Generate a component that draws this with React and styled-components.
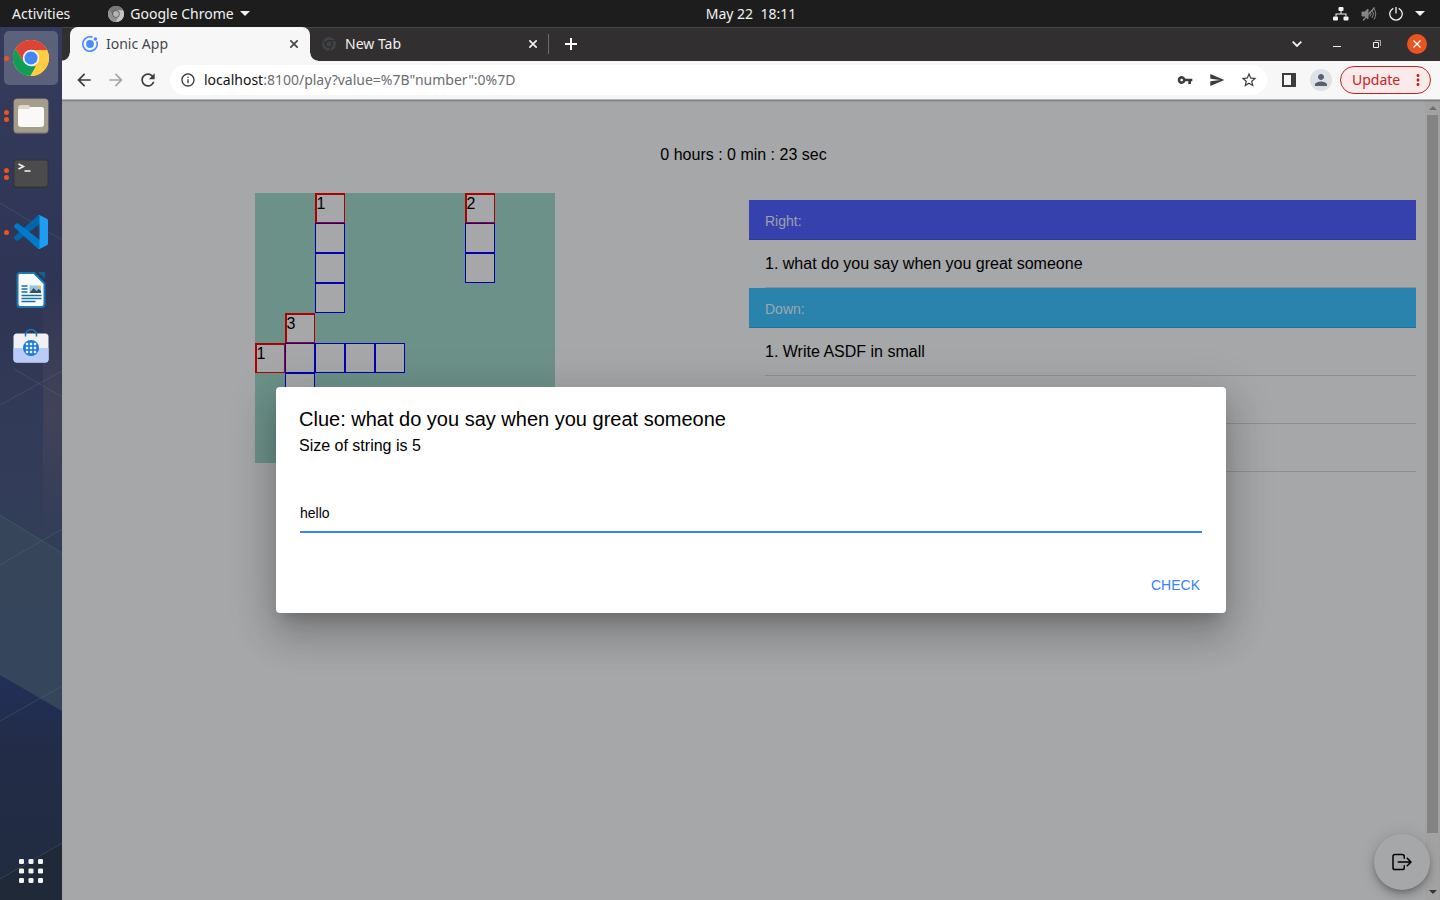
import React from "react";
import styled, { createGlobalStyle, css } from "styled-components";
import {
  MdArrowBack,
  MdArrowForward,
  MdRefresh,
  MdInfoOutline,
  MdVpnKey,
  MdSend,
  MdStarBorder,
  MdPerson,
  MdMoreVert,
} from "react-icons/md";

const GlobalStyle = createGlobalStyle`
  *, *::before, *::after { box-sizing: border-box; }
  html, body, #root { height: 100%; }
  body { margin: 0; background: #1d1d1d; }
  button, input { font: inherit; color: inherit; }
  h1, h2, p, ul { margin: 0; padding: 0; font-weight: 400; }
  svg { display: block; flex: none; }
`;

const uiFont = '"Noto Sans", "Open Sans", sans-serif';
const pageFont = '"Liberation Sans", Arial, sans-serif';

const Desktop = styled.div`
  display: flex;
  flex-direction: column;
  min-height: 100%;
  font: 14px/20px ${uiFont};
`;

const PlainButton = styled.button`
  display: flex;
  align-items: center;
  justify-content: center;
  padding: 0;
  border: 0;
  background: none;
  cursor: pointer;
`;

/* ---------- system bar ---------- */

const SystemBar = styled.header`
  display: grid;
  grid-template-columns: 1fr auto 1fr;
  align-items: center;
  height: 27px;
  background: #1d1d1d;
  color: #f2f2f2;
`;

const SystemMenus = styled.nav`
  display: flex;
  align-items: center;
  gap: 38px;
  padding-left: 12px;
`;

const SystemButton = styled(PlainButton)`
  gap: 6px;
  white-space: pre;
`;

const Clock = styled(SystemButton)`
  margin-left: 62px;
`;

const SystemTray = styled.div`
  display: flex;
  align-items: center;
  justify-content: flex-end;
  gap: 12px;
  padding-right: 15px;
`;

/* ---------- dock ---------- */

const Workspace = styled.div`
  display: flex;
  flex: 1;
`;

const Dock = styled.nav`
  position: relative;
  display: flex;
  flex: none;
  flex-direction: column;
  gap: 4px;
  width: 62px;
  padding: 4px;
`;

const WallpaperLayer = styled.svg`
  position: absolute;
  inset: 0;
  width: 100%;
  height: 100%;
`;

const DockItem = styled(PlainButton)`
  position: relative;
  height: 54px;
  border-radius: 5px;
  background: ${(p) => (p.$active ? "rgba(255, 255, 255, 0.2)" : "none")};
`;

const RunningDots = styled.span`
  position: absolute;
  left: 0;
  display: grid;
  gap: 2px;
`;

const Dot = styled.i`
  width: 5px;
  height: 5px;
  border-radius: 50%;
  background: #e95420;
`;

const AppsButton = styled(DockItem)`
  margin-top: auto;
  margin-bottom: -2px;
`;

/* ---------- browser chrome ---------- */

const Browser = styled.main`
  display: flex;
  flex: 1;
  flex-direction: column;
  min-width: 0;
`;

const TabStrip = styled.div`
  display: flex;
  align-items: center;
  height: 34px;
  padding: 0 13px 0 8px;
  background: #322f30;
  box-shadow: inset 0 1px #484546;
`;

const Tab = styled.div`
  position: relative;
  display: flex;
  align-items: center;
  gap: 8px;
  align-self: stretch;
  width: ${(p) => (p.$active ? "240px" : "238px")};
  padding: 0 ${(p) => (p.$active ? "8px 0 12px" : "7px 0 11px")};
  color: #efefef;
  ${(p) =>
    p.$active &&
    css`
      border-radius: 8px 8px 0 0;
      background: #f7f7f7;
      color: #45474a;
      &::before,
      &::after {
        content: "";
        position: absolute;
        bottom: 0;
        width: 8px;
        height: 8px;
      }
      &::before {
        left: -8px;
        background: radial-gradient(circle at 0 0, transparent 7px, #f7f7f7 8px);
      }
      &::after {
        right: -8px;
        background: radial-gradient(circle at 100% 0, transparent 7px, #f7f7f7 8px);
      }
    `}
`;

const TabTitle = styled.span`
  flex: 1;
`;

const TabDivider = styled.span`
  width: 1px;
  height: 20px;
  background: #6d6b6c;
`;

const SmallButton = styled(PlainButton)`
  width: 16px;
  height: 16px;
`;

const NewTabButton = styled(PlainButton)`
  width: 28px;
  height: 28px;
  margin-left: 8px;
  color: #fff;
`;

const WindowControls = styled.div`
  display: flex;
  align-items: center;
  gap: 20px;
  margin-left: auto;
  color: #f2f2f2;
`;

const WindowButton = styled(PlainButton)`
  width: 20px;
  height: 20px;
  border-radius: 50%;
  background: ${(p) => (p.$close ? "#e95420" : "none")};
`;

const Toolbar = styled.div`
  display: flex;
  align-items: center;
  height: 39px;
  padding: 0 9px 0 6px;
  border-bottom: 1px solid #b5b5b5;
  background: #f7f7f7;
`;

const ToolButton = styled(PlainButton)`
  width: 32px;
  height: 28px;
  color: ${(p) => (p.$muted ? "#a5a5a5" : "#3c3c3e")};
`;

const AddressBar = styled.div`
  display: flex;
  align-items: center;
  flex: 1;
  height: 30px;
  margin: 0 6px;
  padding: 0 2px;
  border-radius: 15px;
  background: #fff;
`;

const Url = styled.div`
  flex: 1;
  color: #6b6d70;
  b {
    color: #111;
    font-weight: 400;
  }
`;

const Avatar = styled.span`
  display: grid;
  place-items: center;
  width: 22px;
  height: 22px;
  border-radius: 50%;
  background: #dee1e6;
  color: #566070;
`;

const UpdateButton = styled(PlainButton)`
  justify-content: space-between;
  width: 91px;
  height: 28px;
  margin-left: 3px;
  padding: 0 3px 0 11px;
  border: 1px solid #c5221f;
  border-radius: 14px;
  background: #fbeaea;
  color: #c5221f;
`;

/* ---------- page ---------- */

const Viewport = styled.div`
  position: relative;
  display: flex;
  flex: 1;
  background: #f5f6f9;
  color: #000;
  font: 16px/24px ${pageFont};
`;

const Page = styled.div`
  flex: 1;
  padding: 43px 9px 0;
`;

const Timer = styled.p`
  text-align: center;
`;

const Columns = styled.div`
  display: grid;
  grid-template-columns: 1fr 1fr;
  gap: 11px;
  margin-top: 26px;
`;

const Board = styled.div`
  display: grid;
  grid-template: repeat(9, 30px) / repeat(10, 30px);
  justify-self: center;
  align-self: start;
  background: #9fd6ca;
`;

const Cell = styled.div`
  grid-area: ${(p) => p.$row} / ${(p) => p.$col};
  border: 1px solid #00f;
  background: #f5f6f9;
  line-height: 18px;
  ${(p) =>
    p.$start &&
    css`
      border-color: #f00;
      border-width: 2px 1px 1px 2px;
    `}
`;

const ClueLists = styled.div`
  padding-top: 7px;
`;

const ClueHeading = styled.h2`
  height: 40px;
  padding: 1px 16px 0;
  border-bottom: 1px solid rgba(0, 0, 0, 0.13);
  background: ${(p) => p.$color};
  color: rgba(255, 255, 255, 0.88);
  font-size: 14px;
  line-height: 40px;
`;

const Clues = styled.ul`
  padding-left: 16px;
  list-style: none;
`;

const Clue = styled.li`
  height: 48px;
  border-bottom: 1px solid #d2d3d6;
  line-height: 47px;
`;

const ScrollTrack = styled.div`
  display: flex;
  flex-direction: column;
  align-items: center;
  width: 15px;
  padding: 6px 2px;
  background: #f1f1f1;
  color: #505050;
`;

const ScrollThumb = styled.div`
  align-self: stretch;
  height: 718px;
  margin: 5px 0 auto;
  background: #c1c1c1;
`;

const ExitButton = styled(PlainButton)`
  position: absolute;
  right: 10px;
  bottom: 10px;
  width: 56px;
  height: 56px;
  border-radius: 50%;
  background: #f5f6f9;
  box-shadow: 0 3px 5px -1px rgba(0, 0, 0, 0.2), 0 6px 10px rgba(0, 0, 0, 0.14), 0 1px 18px rgba(0, 0, 0, 0.12);
`;

const Backdrop = styled.div`
  position: absolute;
  inset: 0;
  display: flex;
  align-items: center;
  justify-content: center;
  overflow: hidden;
  background: rgba(0, 0, 0, 0.32);
  box-shadow: inset 0 2px 2px -1px rgba(0, 0, 0, 0.3);
`;

const Dialog = styled.form`
  width: 950px;
  max-width: 90%;
  border-radius: 4px;
  background: #fff;
  box-shadow: 0 11px 15px -7px rgba(0, 0, 0, 0.2), 0 24px 38px 3px rgba(0, 0, 0, 0.14), 0 9px 46px 8px rgba(0, 0, 0, 0.12);
`;

const DialogHead = styled.div`
  display: grid;
  gap: 3px;
  padding: 20px 23px 0;
`;

const DialogTitle = styled.h1`
  font-size: 20px;
`;

const AnswerField = styled.div`
  padding: 37px 24px 34px;
`;

const AnswerInput = styled.input`
  display: block;
  width: 100%;
  height: 38px;
  padding: 0;
  border: 0;
  border-bottom: 2px solid #3880ff;
  border-radius: 0;
  outline: 0;
  background: none;
  font-size: 14px;
`;

const DialogActions = styled.div`
  display: flex;
  justify-content: flex-end;
  padding: 0 16px 10px;
`;

const CheckButton = styled(PlainButton)`
  height: 36px;
  padding: 0 10px;
  color: #3880ff;
  font-size: 14px;
`;

/* ---------- drawings ---------- */

const Wallpaper = () => (
  <WallpaperLayer viewBox="0 0 62 873" preserveAspectRatio="none" aria-hidden="true">
    <defs>
      <linearGradient id="night" x1="0" y1="0" x2="0" y2="1">
        <stop offset="0" stopColor="#353b5c" />
        <stop offset=".3" stopColor="#2f3554" />
        <stop offset=".5" stopColor="#323c58" />
        <stop offset="1" stopColor="#33435a" />
      </linearGradient>
      <linearGradient id="slate" x1="0" y1="0" x2="0" y2="1">
        <stop offset="0" stopColor="#36455a" />
        <stop offset="1" stopColor="#35455b" />
      </linearGradient>
      <linearGradient id="navy" x1="0" y1="0" x2="0" y2="1">
        <stop offset="0" stopColor="#222f57" />
        <stop offset=".35" stopColor="#222c47" />
        <stop offset="1" stopColor="#212b3f" />
      </linearGradient>
      <linearGradient id="plum" x1="0" y1="0" x2="0" y2="1">
        <stop offset="0" stopColor="#46445a" stopOpacity="0" />
        <stop offset=".5" stopColor="#484658" stopOpacity=".7" />
        <stop offset="1" stopColor="#46445a" stopOpacity="0" />
      </linearGradient>
    </defs>
    <path d="M0 0h62v873H0z" fill="url(#night)" />
    <path d="M43 250h19v270H43z" fill="url(#plum)" />
    <path d="M0 488 62 526v170L0 652z" fill="url(#slate)" />
    <path d="m0 648 62 36v189H0z" fill="url(#navy)" />
    <path d="m0 852 62-36v57H0z" fill="#1f2937" />
    <g fill="none" stroke="#5d7383" strokeOpacity=".35">
      <path d="m0 176 62 37M14 342l48 28M0 378l62-34M0 488l62 38M0 538l62-36M0 694l62-35M0 852l62-36" />
    </g>
  </WallpaperLayer>
);

const ChromeLogo = ({ size, red = "#db4437", yellow = "#ffcd40", green = "#0f9d58", ring = "#f1f1f1", core = "#4285f4" }) => (
  <svg width={size} height={size} viewBox="0 0 48 48" aria-hidden="true">
    <circle cx="24" cy="24" r="24" fill={yellow} />
    <path d="M24 24 14.5 29.5 3.2 12A24 24 0 0 1 44.8 12v1.5H24z" fill={red} />
    <path d="M3.2 12 14.5 29.5 24 35h9.5L24 48A24 24 0 0 1 3.2 12z" fill={green} />
    <path d="M33.6 29.4 23 48a24 24 0 0 0 22.5-34.5H24z" fill={yellow} />
    <circle cx="24" cy="24" r="11" fill={ring} />
    <circle cx="24" cy="24" r="8.7" fill={core} />
  </svg>
);

const DimChromeLogo = () => (
  <svg width="16" height="16" viewBox="0 0 16 16" fill="none" stroke="#3e4346" aria-hidden="true">
    <circle cx="8" cy="8" r="5.500" strokeWidth="3" />
    <circle cx="8" cy="8" r="2.500" fill="#3e4346" stroke="none" />
    <path d="M8 4.500h6.500M5 9.700 1.800 4.200M11 9.800 7.800 15.300" stroke="#322f30" />
  </svg>
);

const IonicLogo = () => (
  <svg width="16" height="16" viewBox="0 0 16 16" aria-hidden="true">
    <path d="M10.6 1.3A7.2 7.2 0 1 0 14.7 5.4" fill="none" stroke="#4a8bfc" strokeWidth="1.600" />
    <circle cx="8" cy="8" r="3.900" fill="#4a8bfc" />
    <circle cx="13.4" cy="3" r="1.800" fill="#4a8bfc" />
  </svg>
);

const CrossIcon = () => (
  <svg width="8" height="8" viewBox="0 0 8 8" stroke="currentColor" strokeWidth="1.700" aria-hidden="true">
    <path d="m.3.3 7.400 7.400M7.700.3.3 7.700" />
  </svg>
);

const PlusIcon = () => (
  <svg width="12" height="12" viewBox="0 0 12 12" fill="currentColor" aria-hidden="true">
    <path d="M5 0h2v5h5v2H7v5H5V7H0V5h5z" />
  </svg>
);

const FilesIcon = () => (
  <svg width="36" height="36" viewBox="0 0 36 36" aria-hidden="true">
    <rect x=".5" y=".5" width="35" height="35" rx="4" fill="#8f8879" />
    <rect x="1" y="1" width="34" height="33" rx="4" fill="#a59d8b" />
    <path d="M5 10q0-3 3-3h7q2 0 2 2h11q3 0 3 3v6H5z" fill="#dfd8cb" />
    <path d="M5 13q0-2 2-2h9l2-2h10q3 0 3 3v14q0 3-3 3H8q-3 0-3-3z" fill="#faf9f7" />
  </svg>
);

const TerminalIcon = () => (
  <svg width="36" height="30" viewBox="0 0 36 30" aria-hidden="true">
    <rect x=".5" y=".5" width="35" height="29" rx="3" fill="#32343a" />
    <rect x="1.5" y="1.5" width="33" height="26" rx="2" fill="#4b4b4b" />
    <path d="m5.500 5 5 2.500-5 2.500M11.500 12h6" fill="none" stroke="#f5f5f5" strokeWidth="1.500" />
  </svg>
);

const CodeIcon = () => (
  <svg width="34" height="34" viewBox="0 0 100 100" aria-hidden="true">
    <path d="M96.500 10.800 75.900.9a6.200 6.200 0 0 0-7.100 1.200L1.300 63.600a4.200 4.200 0 0 0 0 6.200l5.500 5a4.200 4.200 0 0 0 5.300.2L93.400 13.400a4.100 4.100 0 0 1 6.600 3.300v-.3a6.300 6.300 0 0 0-3.500-5.600z" fill="#0065a9" />
    <path d="m96.500 89.200-20.600 9.900a6.200 6.200 0 0 1-7.100-1.200L1.300 36.400a4.200 4.200 0 0 1 0-6.200l5.500-5a4.200 4.200 0 0 1 5.300-.2l81.300 61.600a4.100 4.100 0 0 0 6.600-3.300v.3a6.300 6.300 0 0 1-3.500 5.600z" fill="#007acc" />
    <path d="M75.900 99.100a6.200 6.200 0 0 1-7.100-1.200c2.300 2.300 6.200.7 6.200-2.600V4.700c0-3.300-3.900-4.900-6.200-2.600A6.200 6.200 0 0 1 75.900.9l20.600 9.900a6.300 6.300 0 0 1 3.500 5.600v67.200a6.300 6.300 0 0 1-3.500 5.600z" fill="#1f9cf0" />
  </svg>
);

const WriterIcon = () => (
  <svg width="30" height="36" viewBox="0 0 30 36" aria-hidden="true">
    <path d="M3.500 1H18l10.500 10.500V32a3 3 0 0 1-3 3h-21a3 3 0 0 1-3-3V3.500A2.500 2.500 0 0 1 3.500 1z" fill="#f7fbfd" stroke="#1b78ac" strokeWidth="2" />
    <path d="M22 0h7v7z" fill="#12618f" />
    <path d="M5.500 14h6M5.500 17h6M5.500 20h6M5.500 23.500h20M5.500 26.500h20M5.500 29.500h14" stroke="#1670a3" strokeWidth="1.400" />
    <path d="M13.500 13.500h11.500v7.500H13.500z" fill="#8fc6ea" />
    <path d="m13.500 21 4-5 3 3 2-2 2.500 2v2z" fill="#3d4f5b" />
    <circle cx="23" cy="15" r="1.300" fill="#f3c32c" />
  </svg>
);

const StoreIcon = () => (
  <svg width="36" height="40" viewBox="0 1 36 40" aria-hidden="true">
    <rect x=".5" y="6.500" width="35" height="29" rx="3.500" fill="#f0f1f4" />
    <path d="M.5 21h35v11a3.500 3.500 0 0 1-3.500 3.500H4A3.500 3.500 0 0 1 .5 32z" fill="#b9cbf8" />
    <path d="M12.500 9.500V8a5.500 5.500 0 0 1 11 0v1.500" fill="none" stroke="#1d6fc4" strokeWidth="1.500" />
    <circle cx="18" cy="21" r="8" fill="#1d78d6" />
    {[17, 21, 25].map((y) => [14, 18, 22].map((x) => <rect key={`${x}-${y}`} x={x - 1.2} y={y - 1.2} width="2.400" height="2.400" fill="#e9f2fc" />))}
  </svg>
);

const AppsIcon = () => (
  <svg width="26" height="26" viewBox="0 0 26 26" fill="#f3f3f3" aria-hidden="true">
    {[1, 10.500, 20].map((y) => [1, 10.500, 20].map((x) => <rect key={`${x}-${y}`} x={x} y={y} width="5" height="5" rx="1.300" />))}
  </svg>
);

const Caret = ({ width = 10, height = 5, up, color = "currentColor" }) => (
  <svg width={width} height={height} viewBox="0 0 10 5" fill={color} aria-hidden="true">
    <path d={up ? "M0 5h10L5 0z" : "M0 0h10L5 5z"} />
  </svg>
);

const NetworkIcon = () => (
  <svg width="16" height="14" viewBox="0 0 16 14" fill="#f2f2f2" aria-hidden="true">
    <rect x="5.500" y="0" width="5" height="4" rx="1" />
    <rect x="0" y="9.500" width="5" height="4" rx="1" />
    <rect x="10.500" y="9.500" width="5" height="4" rx="1" />
    <path d="M7.500 4h1v2.500H13.500v3h-1v-2h-9v2h-1v-3h5z" />
  </svg>
);

const MutedIcon = () => (
  <svg width="16" height="14" viewBox="0 0 16 14" fill="none" stroke="#858585" aria-hidden="true">
    <path d="M1 5h2.500L7 2v10L3.500 9H1z" fill="#858585" />
    <path d="M9 4.500q2 2.500 0 5M11 3q3 4 0 8M13 1.500q3.500 5.500 0 11" />
    <path d="M2 13.500 13.500.5" strokeWidth="1.300" />
  </svg>
);

const PowerIcon = () => (
  <svg width="14" height="14" viewBox="0 0 14 14" fill="none" stroke="#f2f2f2" strokeWidth="1.300" aria-hidden="true">
    <path d="M4.300 1.300a6.200 6.200 0 1 0 5.400 0M7 0v6.500" />
  </svg>
);

const ExitIcon = () => (
  <svg width="24" height="24" viewBox="0 0 512 512" fill="none" stroke="#000" strokeWidth="32" strokeLinecap="round" strokeLinejoin="round" aria-hidden="true">
    <path d="M304 336v40a40 40 0 0 1-40 40H104a40 40 0 0 1-40-40V136a40 40 0 0 1 40-40h152c22.090 0 48 17.910 48 40v40M368 336l80-80-80-80M176 256h256" />
  </svg>
);

/* ---------- data ---------- */

const dockApps = [
  { name: "Google Chrome", icon: <ChromeLogo size={36} />, windows: 1, active: true },
  { name: "Files", icon: <FilesIcon />, windows: 2 },
  { name: "Terminal", icon: <TerminalIcon />, windows: 2 },
  { name: "Visual Studio Code", icon: <CodeIcon />, windows: 1 },
  { name: "LibreOffice Writer", icon: <WriterIcon />, windows: 0 },
  { name: "Software", icon: <StoreIcon />, windows: 0 },
];

const cells = [
  { row: 1, col: 3, label: "1" },
  { row: 2, col: 3 },
  { row: 3, col: 3 },
  { row: 4, col: 3 },
  { row: 1, col: 8, label: "2" },
  { row: 2, col: 8 },
  { row: 3, col: 8 },
  { row: 5, col: 2, label: "3" },
  { row: 6, col: 1, label: "1" },
  { row: 6, col: 2 },
  { row: 6, col: 3 },
  { row: 6, col: 4 },
  { row: 6, col: 5 },
  { row: 7, col: 2 },
];

export default function App() {
  return (
    <Desktop>
      <GlobalStyle />
      <SystemBar>
        <SystemMenus>
          <SystemButton>Activities</SystemButton>
          <SystemButton>
            <ChromeLogo size={16} red="#777" yellow="#c4c4c4" green="#929292" ring="#555" core="#b5b5b5" />
            Google Chrome
            <Caret />
          </SystemButton>
        </SystemMenus>
        <Clock>{"May 22  18:11"}</Clock>
        <SystemTray>
          <NetworkIcon />
          <MutedIcon />
          <PowerIcon />
          <SystemButton aria-label="System menu">
            <Caret />
          </SystemButton>
        </SystemTray>
      </SystemBar>

      <Workspace>
        <Dock>
          <Wallpaper />
          {dockApps.map((app) => (
            <DockItem key={app.name} aria-label={app.name} $active={app.active}>
              <RunningDots>
                {Array.from({ length: app.windows }, (_, i) => (
                  <Dot key={i} />
                ))}
              </RunningDots>
              {app.icon}
            </DockItem>
          ))}
          <AppsButton aria-label="Show applications">
            <AppsIcon />
          </AppsButton>
        </Dock>

        <Browser>
          <TabStrip>
            <Tab $active>
              <IonicLogo />
              <TabTitle>Ionic App</TabTitle>
              <SmallButton aria-label="Close tab">
                <CrossIcon />
              </SmallButton>
            </Tab>
            <Tab>
              <DimChromeLogo />
              <TabTitle>New Tab</TabTitle>
              <SmallButton aria-label="Close tab">
                <CrossIcon />
              </SmallButton>
            </Tab>
            <TabDivider />
            <NewTabButton aria-label="New tab">
              <PlusIcon />
            </NewTabButton>
            <WindowControls>
              <WindowButton aria-label="Search tabs">
                <svg width="10" height="6" viewBox="0 0 10 6" fill="none" stroke="currentColor" strokeWidth="1.800">
                  <path d="m.7.7 4.300 4.300L9.300.7" />
                </svg>
              </WindowButton>
              <WindowButton aria-label="Minimize">
                <svg width="8" height="6" viewBox="0 0 8 6">
                  <path d="M0 5h8v1H0z" fill="currentColor" />
                </svg>
              </WindowButton>
              <WindowButton aria-label="Restore">
                <svg width="8" height="8" viewBox="0 0 8 8" fill="none" stroke="currentColor">
                  <path d="M.5 2.500h5v5h-5z" />
                  <path d="M2 .5h5.500V6" opacity=".6" />
                </svg>
              </WindowButton>
              <WindowButton $close aria-label="Close window">
                <svg width="8" height="8" viewBox="0 0 8 8" stroke="#fff" strokeWidth="1.300">
                  <path d="m.5.5 7 7M7.500.5l-7 7" />
                </svg>
              </WindowButton>
            </WindowControls>
          </TabStrip>

          <Toolbar>
            <ToolButton aria-label="Back">
              <MdArrowBack size={20} />
            </ToolButton>
            <ToolButton aria-label="Forward" $muted>
              <MdArrowForward size={20} />
            </ToolButton>
            <ToolButton aria-label="Reload">
              <MdRefresh size={20} />
            </ToolButton>
            <AddressBar>
              <ToolButton aria-label="Site information">
                <MdInfoOutline size={16} />
              </ToolButton>
              <Url>
                <b>localhost</b>:8100/play?value=%7B"number":0%7D
              </Url>
              <ToolButton aria-label="Passwords">
                <MdVpnKey size={16} />
              </ToolButton>
              <ToolButton aria-label="Share">
                <MdSend size={16} />
              </ToolButton>
              <ToolButton aria-label="Bookmark">
                <MdStarBorder size={18} />
              </ToolButton>
            </AddressBar>
            <ToolButton aria-label="Side panel">
              <svg width="14" height="14" viewBox="0 0 14 14">
                <path d="M0 0h14v14H0zm2 2v10h7V2z" fill="currentColor" fillRule="evenodd" />
              </svg>
            </ToolButton>
            <ToolButton aria-label="Profile">
              <Avatar>
                <MdPerson size={18} />
              </Avatar>
            </ToolButton>
            <UpdateButton>
              Update
              <MdMoreVert size={18} />
            </UpdateButton>
          </Toolbar>

          <Viewport>
            <Page>
              <Timer>0 hours : 0 min : 23 sec</Timer>
              <Columns>
                <Board>
                  {cells.map((cell) => (
                    <Cell key={`${cell.row}-${cell.col}`} $row={cell.row} $col={cell.col} $start={Boolean(cell.label)}>
                      {cell.label}
                    </Cell>
                  ))}
                </Board>
                <ClueLists>
                  <ClueHeading $color="#5260ff">Right:</ClueHeading>
                  <Clues>
                    <Clue>1. what do you say when you great someone</Clue>
                  </Clues>
                  <ClueHeading $color="#3dc2ff">Down:</ClueHeading>
                  <Clues>
                    <Clue>1. Write ASDF in small</Clue>
                    <Clue />
                    <Clue />
                  </Clues>
                </ClueLists>
              </Columns>
            </Page>
            <ScrollTrack>
              <Caret up width={8} height={4} color="#a3a3a3" />
              <ScrollThumb />
              <Caret width={8} height={4} />
            </ScrollTrack>
            <ExitButton aria-label="Exit">
              <ExitIcon />
            </ExitButton>
            <Backdrop>
              <Dialog role="dialog" aria-labelledby="clue-title" onSubmit={(e) => e.preventDefault()}>
                <DialogHead>
                  <DialogTitle id="clue-title">Clue: what do you say when you great someone</DialogTitle>
                  <p>Size of string is 5</p>
                </DialogHead>
                <AnswerField>
                  <AnswerInput aria-label="Answer" defaultValue="hello" />
                </AnswerField>
                <DialogActions>
                  <CheckButton type="submit">CHECK</CheckButton>
                </DialogActions>
              </Dialog>
            </Backdrop>
          </Viewport>
        </Browser>
      </Workspace>
    </Desktop>
  );
}
